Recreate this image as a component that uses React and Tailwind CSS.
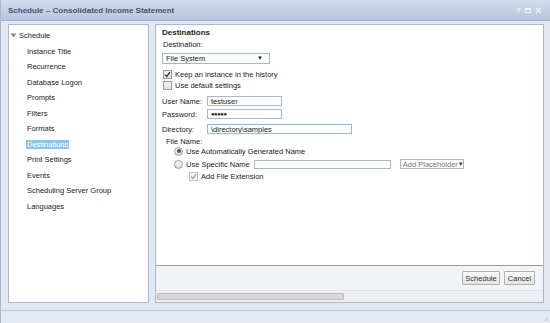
import React from 'react';

const navItems = [
  'Instance Title',
  'Recurrence',
  'Database Logon',
  'Prompts',
  'Filters',
  'Formats',
  'Destinations',
  'Print Settings',
  'Events',
  'Scheduling Server Group',
  'Languages',
];

const Check = ({ checked, disabled }) => (
  <span
    className={`w-[9px] h-[9px] border flex items-center justify-center shrink-0 ${
      disabled ? 'border-[#c4c4c4] bg-[#f4f4f4]' : 'border-[#9a9a9a] bg-gradient-to-b from-[#f6f6f6] to-[#e2e2e2]'
    }`}
  >
    {checked && (
      <svg width="7" height="7" viewBox="0 0 7 7">
        <path d="M1 3.6 L2.8 5.4 L6 1.2" fill="none" stroke={disabled ? '#9c9c9c' : '#333'} strokeWidth="1.3" />
      </svg>
    )}
  </span>
);

const Radio = ({ checked }) => (
  <span className="w-[9px] h-[9px] rounded-full border border-[#9a9a9a] bg-gradient-to-b from-[#f4f4f4] to-[#dcdcdc] flex items-center justify-center shrink-0">
    {checked && <span className="w-[4px] h-[4px] rounded-full bg-[#555]" />}
  </span>
);

const Field = ({ label, value, width, focused }) => (
  <div className="flex items-center h-[10px]">
    <span className="w-[45px]">{label}</span>
    <div
      className={`h-[10px] border px-[3px] flex items-center bg-white overflow-hidden ${
        focused ? 'border-[#8fb8e6]' : 'border-[#a9b6c8]'
      }`}
      style={{ width }}
    >
      {value}
    </div>
  </div>
);

export default function App() {
  return (
    <div
      className="w-[550px] h-[323px] bg-[#e3e9f2] border-l border-[#a8b8d2] flex flex-col overflow-hidden text-[#222] text-[7.5px] leading-[9px]"
      style={{ fontFamily: '"Liberation Sans", Arial, sans-serif' }}
    >
      {/* title bar */}
      <div className="h-[21px] shrink-0 bg-gradient-to-b from-[#d3ddeb] to-[#b6c6dd] border-b border-[#9fb2cf] flex items-center pl-[7px] pr-[8px]">
        <span className="font-bold text-[8px] text-[#44546d]">Schedule – Consolidated Income Statement</span>
        <div className="ml-auto flex items-center gap-[4px] text-[#eef2f8]">
          <span className="text-[8px] font-bold">?</span>
          <span className="w-[6px] h-[5px] border border-[#eef2f8] border-t-2" />
          <svg width="7" height="7" viewBox="0 0 7 7">
            <path d="M1 1 L6 6 M6 1 L1 6" stroke="#eef2f8" strokeWidth="1.4" />
          </svg>
        </div>
      </div>

      {/* body */}
      <div className="flex gap-[6px] pl-[7px] pr-[6px] pt-[3px] h-[282px] shrink-0">
        {/* tree */}
        <div className="w-[141px] h-full bg-white border border-[#a8b8d2] pt-[3px]">
          <div className="flex items-center h-[15.5px] pl-[1px]">
            <svg width="7" height="5" viewBox="0 0 7 5" className="mr-[2px]">
              <path d="M0.5 0.5 L6.5 0.5 L3.5 4.5 Z" fill="#8a8a8a" />
            </svg>
            <span>Schedule</span>
          </div>
          {navItems.map((item) => (
            <div key={item} className="h-[15.5px] flex items-center pl-[17px]">
              <span
                className={
                  item === 'Destinations'
                    ? 'bg-[#8ec5ec] text-white px-[1px] h-[9px] flex items-center'
                    : 'px-[1px]'
                }
              >
                {item}
              </span>
            </div>
          ))}
        </div>

        {/* destination panel */}
        <div className="flex-1 h-full border border-[#a8b8d2] flex flex-col bg-[#f3f4f8]">
          <div className="flex-1 bg-white border-b border-[#9c9c9c] pl-[6px] pt-[3px]">
            <div className="font-bold text-[8px] leading-[9px]">Destinations</div>
            <div className="mt-[3px] pl-[1px]">Destination:</div>
            <div className="mt-[4px] w-[108px] h-[11px] border border-[#a9b6c8] bg-white flex items-center px-[3px]">
              <span>File System</span>
              <span className="ml-auto text-[6px] mr-[3px]">▼</span>
            </div>
            <div className="mt-[5px] flex items-center gap-[3px] h-[10px] pl-[1px]">
              <Check checked />
              <span>Keep an instance in the history</span>
            </div>
            <div className="mt-[1px] flex items-center gap-[3px] h-[10px] pl-[1px]">
              <Check />
              <span>Use default settings</span>
            </div>
            <div className="mt-[6px] flex flex-col gap-[3px]">
              <Field label="User Name:" value="testuser" width={75} />
              <Field label="Password:" value={<span className="text-[6px] leading-[6px] tracking-[-0.5px]">●●●●●</span>} width={75} />
              <div className="mt-[2px]">
                <Field label="Directory:" value="\directory\samples" width={145} focused />
              </div>
            </div>
            <div className="mt-[3px] pl-[4px]">File Name:</div>
            <div className="pl-[12px] flex flex-col">
              <div className="mt-[0px] flex items-center gap-[3px] h-[10px]">
                <Radio checked />
                <span>Use Automatically Generated Name</span>
              </div>
              <div className="mt-[3px] flex items-center gap-[3px] h-[10px]">
                <Radio />
                <span>Use Specific Name</span>
                <div className="ml-[1px] w-[137px] h-[9px] border border-[#a9b6c8] bg-white" />
                <div className="ml-[6px] w-[64px] h-[10px] border border-[#b4b4b4] bg-white flex items-center px-[2px] text-[#777] whitespace-nowrap">
                  <span>Add Placeholder</span>
                  <span className="ml-auto text-[6px] text-[#333]">▼</span>
                </div>
              </div>
              <div className="mt-[2px] flex items-center gap-[3px] h-[10px] pl-[15px]">
                <Check checked disabled />
                <span>Add File Extension</span>
              </div>
            </div>
          </div>

          {/* footer */}
          <div className="h-[24px] shrink-0 flex items-center justify-end gap-[4px] pr-[8px]">
            <button className="h-[14px] w-[38px] border border-[#b0b0b0] rounded-[1px] bg-gradient-to-b from-[#fbfbfb] to-[#e4e4e4] text-[#333] text-[7.5px]">
              Schedule
            </button>
            <button className="h-[14px] w-[31px] border border-[#b0b0b0] rounded-[1px] bg-gradient-to-b from-[#fbfbfb] to-[#e4e4e4] text-[#333] text-[7.5px]">
              Cancel
            </button>
          </div>

          {/* scrollbar */}
          <div className="h-[12px] shrink-0 border-t border-[#e2e2e2] bg-[#eef0f4] flex items-center pl-[1px]">
            <div className="w-[187px] h-[7px] rounded-[1px] border border-[#bdbdbd] bg-[#d8d8d8]" />
          </div>
        </div>
      </div>

      {/* status bar */}
      <div className="mt-[7px] flex-1 border-t border-[#b8c6dc] bg-[#e4eaf3] flex items-end justify-end pr-[1px] pb-[1px]">
        <svg width="6" height="6" viewBox="0 0 6 6">
          <path d="M5 1 L1 5 M5 3 L3 5" stroke="#b4bfd0" strokeWidth="0.8" />
        </svg>
      </div>
    </div>
  );
}
